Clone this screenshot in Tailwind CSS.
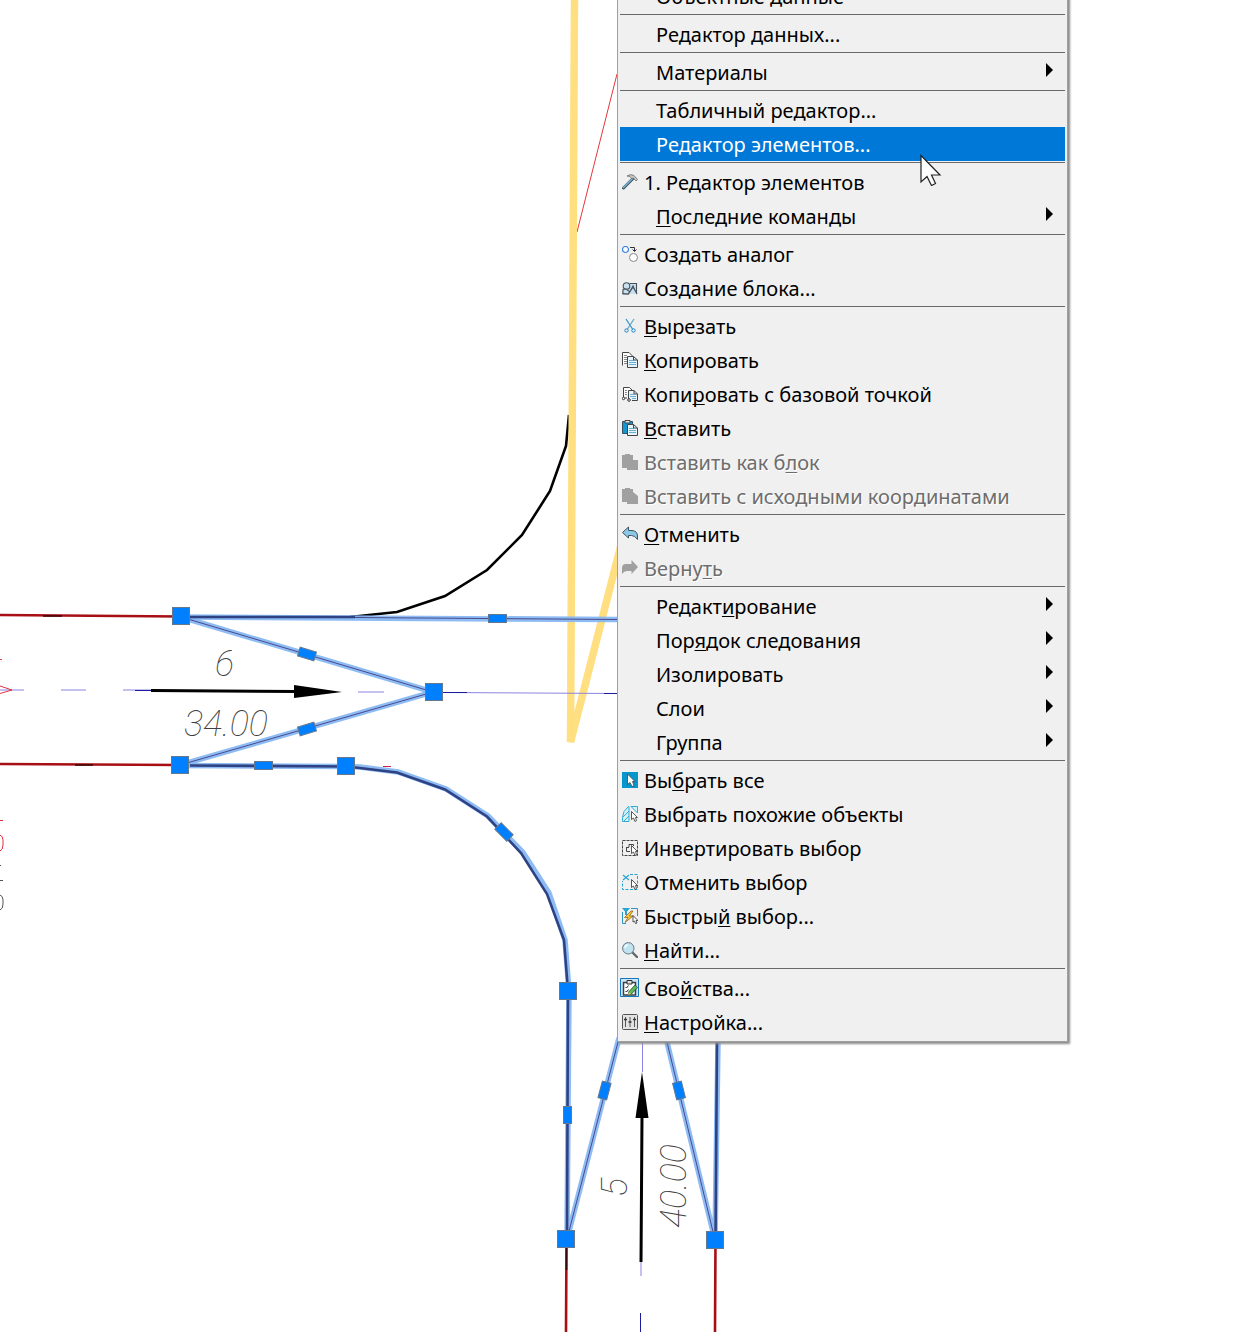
<!DOCTYPE html>
<html lang="ru">

<head>
    <meta charset="UTF-8">
    <meta name="viewport" content="width=device-width, initial-scale=1.0">
    <title>Редактор элементов</title>
    <script src="https://cdn.jsdelivr.net/npm/@tailwindcss/browser@4"></script>
</head>

<body class="relative min-h-screen overflow-hidden bg-white font-['Noto_Sans',sans-serif]">
    <!-- Drawing -->
    <svg class="block h-screen w-full" fill="none" aria-label="Чертёж">
        <!-- Road edges -->
        <path d="M0 615L181 616.5M0 764L180 765M566.5 1240L566 1332M715.5 1240L715 1332" stroke="#a80f14" stroke-width="2.6" />
        <path d="M43 616H62M75 765H93M566.5 1248V1270" stroke="#3a0508" stroke-width="1.5" />
        <path d="M617 74L577 232" stroke="#e02025" stroke-width="0.9" />
        <path d="M350 617L397 612L445 596L487 570L522 535L550 491L566 446L569 415" stroke="#000" stroke-width="2.6" />
        <path d="M574.5 0L570.5 742L632 502" stroke="#ffdf80" stroke-width="7.5" stroke-linejoin="bevel" />

        <!-- Center lines -->
        <path d="M0 690H24M61 690H86M123 690H151M358 692H384M443 692.5L617 693.5M642.5 1042V1072M641 1262V1276" stroke="#8c84e0" />
        <path d="M135 690.5H151M443 692.5H467M604 693.5H617M640.5 1313V1332" stroke="#1c1ca0" />
        <path d="M0 686L12 690L0 693.5M0 659.5H2" stroke="#e02030" stroke-width="0.9" />
        <path d="M151 690.5L296 691.5M642 1116L641 1262" stroke="#000" stroke-width="3" />
        <path d="M294 685L342 692L294 698ZM642 1072L648.5 1118H635.5Z" fill="#000" />

        <!-- Selected outline -->
        <g stroke="#84b6f3" stroke-width="5.5" stroke-opacity="0.93">
            <path d="M181 617L433 692L180 765" />
            <path d="M181 617L617 619.5" />
            <path d="M180 765.5L346 766.5L360 767L398 772L446 789L488 816L523 852.5L549 893L565 940L569 991L567 1239L619 1038" />
            <path d="M666 1038L715 1240L718 1042" />
        </g>
        <path d="M190 617H355M190 765.5L346 766.5L360 768L397 772.5L445 789.5L487 816.5L521 853L547 894L564 940L568 991L567 1239M717 1042L715.5 1240" stroke="#2f4384" stroke-width="2.6" />
        <path d="M355 617.5L617 619.5M181 617L433 692L180 765M567 1239L619 1038M666 1038L715 1240" stroke="#4a4a8c" />
        <path d="M383 766.5H391" stroke="#cc2040" />

        <!-- Grips -->
        <g fill="#007fff" stroke="#64788f">
            <rect x="172.5" y="607.5" width="17" height="17" />
            <rect x="425.5" y="683.5" width="17" height="17" />
            <rect x="171.5" y="756.5" width="17" height="17" />
            <rect x="337.5" y="757.5" width="17" height="17" />
            <rect x="559.5" y="982.5" width="17" height="17" />
            <rect x="557.5" y="1230.5" width="17" height="17" />
            <rect x="706.5" y="1231.5" width="17" height="17" />
            <rect x="488.5" y="614.5" width="18" height="8" />
            <rect x="254.5" y="761.5" width="18" height="8" />
            <rect x="563.5" y="1106.5" width="8" height="17" />
            <rect x="298.5" y="649.5" width="17" height="9" transform="rotate(17 307 654)" />
            <rect x="298.5" y="724.5" width="17" height="9" transform="rotate(-17 307 729)" />
            <rect x="495.5" y="827.5" width="17" height="9" transform="rotate(45 504 832)" />
            <rect x="600" y="1082" width="9" height="17" transform="rotate(15 604.5 1090.5)" />
            <rect x="674.5" y="1082" width="9" height="17" transform="rotate(-14 679 1090.5)" />
        </g>

        <!-- Dimensions -->
        <g class="fill-neutral-700 font-['Roboto',sans-serif] text-[36px] font-thin italic">
            <text x="215" y="676">6</text>
            <text x="184" y="736">34.00</text>
            <text transform="translate(627 1197) rotate(-90)">5</text>
            <text transform="translate(686 1228) rotate(-90)">40.00</text>
        </g>
        <path d="M0 820.5H3M0 835Q3 836 3 840V845Q3 850 0 851" stroke="#e03040" />
        <path d="M0 865.5H1M0 880.5H3M0 895Q3 896 3 900V904Q3 909 0 910" stroke="#555" />
    </svg>

    <!-- Context menu -->
    <nav aria-label="Контекстное меню" class="absolute -top-6 left-[617px] w-[451px] border border-[#a0a0a0] bg-[#f0f0f0] p-0.5 text-xl/8 text-black shadow-[2px_2px_2px_#8c8c8c] [&_button]:flex [&_button]:h-[34px] [&_button]:w-full [&_button]:items-center [&_button]:pt-0.5 [&_button]:whitespace-pre [&_button]:text-left [&_hr]:my-px [&_hr]:h-0.5 [&_hr]:border-t [&_hr]:border-[#696969] [&_i]:mb-1.5 [&_i]:h-3.5 [&_i]:w-[7px] [&_i]:bg-black [&_i]:[clip-path:polygon(0_0,100%_50%,0_100%)] [&_svg]:mr-1.5 [&_svg]:mb-0.5 [&_svg]:ml-0.5 [&_svg]:size-4 [&_svg]:shrink-0 [&_u]:underline-offset-2 [&_u]:decoration-1 [&_u]:[text-decoration-skip-ink:none]">
        <button class="pl-9">Объектные данные</button>
        <hr>
        <button class="pl-9">Редактор данных...</button>
        <hr>
        <button class="justify-between pr-3 pl-9">Материалы<i></i></button>
        <hr>
        <button class="pl-9">Табличный редактор...</button>
        <button class="bg-[#0078d7] pl-9 text-white">Редактор элементов...</button>
        <hr>
        <button><svg viewBox="0 0 16 16" fill="none"><path d="M1.5 14L11 4.5" stroke="#3b5261" stroke-width="3" stroke-linecap="round" /><path d="M1.5 13.5L10.5 4.5" stroke="#78b5d2" stroke-width="1.6" stroke-linecap="round" /><path d="M5 2Q9 -.5 12 1.5L15.5 5.5L14 7L11.5 4L9.5 4.5L8 2.5Z" fill="#c8c8c8" stroke="#6a6a6a" stroke-width=".8" /></svg>1. Редактор элементов</button>
        <button class="justify-between pr-3 pl-9"><span><u>П</u>оследние команды</span><i></i></button>
        <hr>
        <button><svg viewBox="0 0 16 16" fill="none"><circle cx="3.5" cy="3.5" r="3" fill="#fff" stroke="#3a83dc" stroke-width="1.2" /><circle cx="11.5" cy="11.5" r="4" fill="#fff" stroke="#888" /><path d="M8 1.5H12.5V5M10.5 3.5L12.5 5.5L14.5 3.5" stroke="#333" /></svg>Создать аналог</button>
        <button><svg viewBox="0 0 16 16" fill="#c9e0ee" stroke="#45535c" stroke-width="1.1"><path d="M7.5 3.5H14.5V14L11 6L6.500 14H1V11.500" /><circle cx="4.500" cy="6" r="3.300" /><path d="M1 13.500V9.500L4 9L7.500 11.500L6.500 14ZM6.500 14L11 7L15 14" /></svg>Создание блока...</button>
        <hr>
        <button><svg viewBox="0 0 16 16" fill="none"><path d="M4 1L10.5 11" stroke="#2d98d1" stroke-width="1.3" /><path d="M12 1L5.5 11" stroke="#66a7c8" stroke-width="1.3" /><circle cx="4.5" cy="12.5" r="1.7" stroke="#1689c5" /><circle cx="11.5" cy="12.5" r="1.7" stroke="#1689c5" /></svg><span><u>В</u>ырезать</span></button>
        <button><svg viewBox="0 0 16 16" fill="none"><path d="M.5 13.5V.5H7L10.5 4V5" fill="#fff" stroke="#444" /><path d="M2 3.5H5M2 5.5H5M2 7.5H5M2 9.5H5M2 11.5H5" stroke="#888" /><path d="M5.5 4.5H11.5L15.5 8V15.5H5.5Z" fill="#e7f4fb" stroke="#444" /><path d="M7 8.5H12M7 10.5H14M7 12.5H14" stroke="#6aafd0" /><path d="M11.5 4.5V8H15.5" stroke="#444" /></svg><span><u>К</u>опировать</span></button>
        <button><svg viewBox="0 0 16 16" fill="none"><path d="M1.5 11V1.5H7.5L10 4V5" fill="#fff" stroke="#444" /><path d="M3 4.5H5M3 6.5H5M3 8.5H5" stroke="#888" /><path d="M6.5 13V4.5H12L15.5 8V14.5H10" fill="#e7f4fb" stroke="#444" /><path d="M8 8.5H12M8 10.5H14M10 12.5H14" stroke="#6aafd0" /><path d="M12 4.5V8H15.5M1.5 12H5" stroke="#444" /><circle cx="1.5" cy="12.5" r="1.2" fill="#fff" stroke="#333" /><circle cx="7" cy="14" r="1.3" fill="#fff" stroke="#333" /></svg><span>Копи<u>р</u>овать с базовой точкой</span></button>
        <button><svg viewBox="0 0 16 16" fill="none"><path d="M.5 1.5H10.5V13.5H.5Z" fill="#1496cf" stroke="#36515f" /><path d="M3 .5H8V3H3Z" fill="#e8e8e8" stroke="#444" /><path d="M5.5 4.5H11.5L15.5 8V15.5H5.5Z" fill="#e7f4fb" stroke="#444" /><path d="M7 8.5H12M7 10.5H14M7 12.5H14" stroke="#6aafd0" /><path d="M11.5 4.5V8H15.5" stroke="#444" /></svg><span><u>В</u>ставить</span></button>
        <button disabled class="text-[#6d6d6d] [text-shadow:1px_1px_#fff]"><svg viewBox="0 0 16 16" fill="#a0a0a0"><path d="M0 1H3V0H8V1H11V6H16V16H5V14H0Z" /></svg><span>Вставить как б<u>л</u>ок</span></button>
        <button disabled class="text-[#6d6d6d] [text-shadow:1px_1px_#fff]"><svg viewBox="0 0 16 16" fill="#a0a0a0"><path d="M0 1H3V0H8V1H11V4L16 8V16H5V14H0Z" /></svg><span>Вставить с исходными координатами</span></button>
        <hr>
        <button><svg viewBox="0 0 16 16"><path d="M.5 6.5L6.5 1V4.5H10Q15.5 5 15.5 10V13.5Q13 9.5 9.5 9.5H6.5V12Z" fill="#8bc8e5" stroke="#405563" /></svg><span><u>О</u>тменить</span></button>
        <button disabled class="text-[#6d6d6d] [text-shadow:1px_1px_#fff]"><svg viewBox="0 0 16 16" fill="#a0a0a0"><path d="M16 7L9.5 0V4H4Q0 4 0 8V14Q2 11 5 11H9.5V14Z" /></svg><span>Верну<u>т</u>ь</span></button>
        <hr>
        <button class="justify-between pr-3 pl-9"><span>Редакт<u>и</u>рование</span><i></i></button>
        <button class="justify-between pr-3 pl-9"><span>Пор<u>я</u>док следования</span><i></i></button>
        <button class="justify-between pr-3 pl-9">Изолировать<i></i></button>
        <button class="justify-between pr-3 pl-9">Слои<i></i></button>
        <button class="justify-between pr-3 pl-9">Группа<i></i></button>
        <hr>
        <button><svg viewBox="0 0 16 16"><path d="M0 0H16V16H0Z" fill="#0795cc" /><path d="M5.5 2V12.5L8 10.5L10 14.5L12 13.5L10.5 9.5H13Z" fill="#fff" stroke="#444" stroke-width=".8" /></svg><span>Вы<u>б</u>рать все</span></button>
        <button><svg viewBox="0 0 16 16" fill="none"><path d="M6.5 .5Q.5 5 .5 11.5V15.5H7V.5ZM9 .5H15.5V7ZM.5 11.5L7 5M2 15L7 10" fill="#d7f0f8" stroke="#31acd5" /><path d="M9.5 5.5V13.5L11.5 12L13 15.5L14.5 14.5L13.5 11.5H15.5Z" fill="#fff" stroke="#444" stroke-width=".9" /></svg>Выбрать похожие объекты</button>
        <button><svg viewBox="0 0 16 16" fill="none"><path d="M.5 .5H15.5V15.5H.5Z" stroke="#444" stroke-dasharray="3 1" /><path d="M7 4.5H11.5V6M7 4.5V7M4.5 7V11.5H8M4.5 7.5H7" stroke="#444" /><path d="M9.5 5.5V13.5L11.5 12L13 15.5L14.5 14.5L13.5 11.5H15.5Z" fill="#fff" stroke="#444" stroke-width=".9" /></svg>Инвертировать выбор</button>
        <button><svg viewBox="0 0 16 16" fill="none"><path d="M8 .5H15.5V15.5H.5V7" stroke="#23a4d0" stroke-dasharray="3 1.5" /><path d="M1 1L7 6M7 1L1 6" stroke="#23a4d0" stroke-width="1.1" /><path d="M9.5 5.5V13.5L11.5 12L13 15.5L14.5 14.5L13.5 11.5H15.5Z" fill="#fff" stroke="#444" stroke-width=".9" /></svg>Отменить выбор</button>
        <button><svg viewBox="0 0 16 16" fill="none"><path d="M.5 4V15.5H4M9 .5H15.5V8" stroke="#2b93bd" /><path d="M0 0H8L5 3.5V7H3V3.5Z" fill="#26a4d2" /><path d="M9 3L2.5 9.5H6L3 14.5L11 8H7.5L11 3Z" fill="#f9c52d" stroke="#805a19" stroke-width=".7" /><path d="M11 7.5V14L12.5 13L13.5 15.5L15 15L14 12.5H16Z" fill="#fff" stroke="#444" stroke-width=".9" /></svg><span>Быстры<u>й</u> выбор...</span></button>
        <button><svg viewBox="0 0 16 16"><path d="M10 10L15 15" stroke="#5f6266" stroke-width="2.3" stroke-linecap="round" /><circle cx="6.3" cy="6.3" r="5.7" fill="#c0e3f2" stroke="#667780" /><path d="M3 6Q3.5 3 6 3" stroke="#fff" stroke-width="1.5" fill="none" /></svg><span><u>Н</u>айти...</span></button>
        <hr>
        <button><svg class="overflow-visible" viewBox="0 0 16 16" fill="none"><path d="M-1.5 -1.5H16.5V16.5H-1.5Z" fill="#cce4f7" stroke="#1675bd" /><path d="M1.5 2.5H13.5V15H1.5Z" fill="#fff" stroke="#354047" stroke-width="1.5" /><path d="M5 .5H10V4H5Z" fill="#ddd" stroke="#333" /><path d="M3.5 7L4.5 8L6.5 5.5M3.5 11L4.5 12L6.5 9.5" stroke="#222" /><path d="M13 5L15.5 7.5L9.5 14L6 15L7 11.5Z" fill="#5fb85b" stroke="#1f5428" stroke-width=".8" /><path d="M7 12L9 14L6 15Z" fill="#efc48b" /></svg><span>Сво<u>й</u>ства...</span></button>
        <button><svg viewBox="0 0 16 16" fill="none"><rect x=".5" y=".5" width="15" height="15" rx="1" fill="#e3e3e3" stroke="#555" /><path d="M3.5 3V13M8 3V13M12.5 3V13" stroke="#555" /><path d="M2 5.5H5M6.5 8H9.5M11 5.5H14" stroke="#333" stroke-width="1.5" /></svg><span><u>Н</u>астройка...</span></button>
    </nav>

    <!-- Mouse pointer -->
    <svg class="pointer-events-none absolute top-[154px] left-[920px] h-8 w-[22px]" viewBox="0 0 22 32">
        <path d="M1 1.5V28L7 22.5L11.5 31.5L15.5 29.5L11.5 21H20Z" fill="#fff" stroke="#222" stroke-width="1.2" />
    </svg>
</body>

</html>
